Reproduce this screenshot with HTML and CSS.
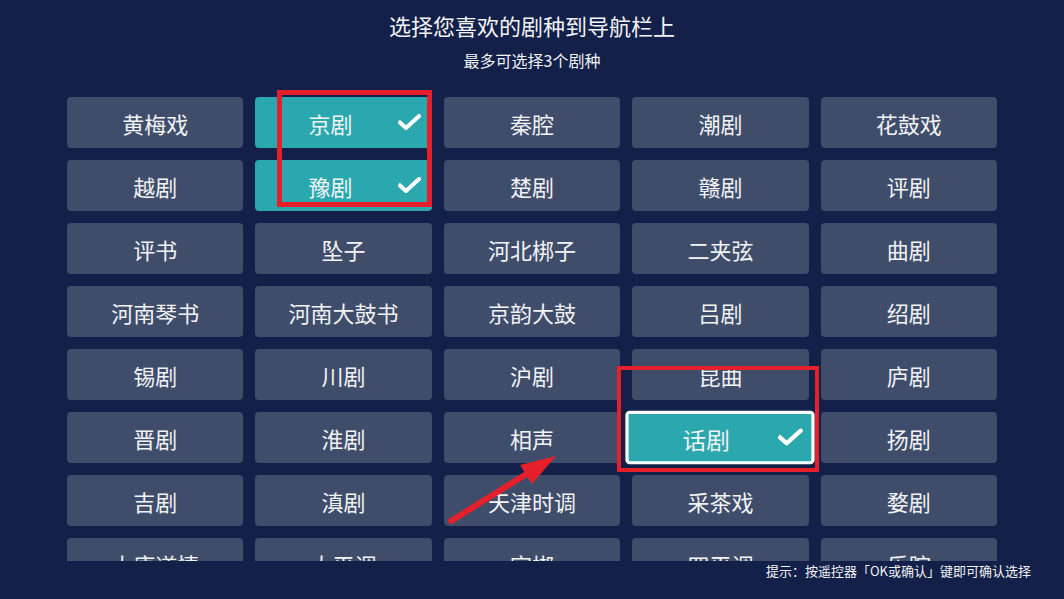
FILE: index.html
```html
<!DOCTYPE html>
<html lang="zh-CN">
<head>
    <meta charset="UTF-8">
    <title>选择剧种</title>
    <link rel="stylesheet" href="styles.css">
</head>
<body>
    <div class="page">
        <div class="header">
            <h1 class="title">选择您喜欢的剧种到导航栏上</h1>
            <p class="subtitle">最多可选择3个剧种</p>
        </div>
        <div class="grid-wrap">
            <div class="grid">
                <div class="tile">黄梅戏</div>
                <div class="tile selected">京剧<svg class="check" viewBox="0 0 23 16"><polyline points="2,8.5 8,14 21,2"/></svg></div>
                <div class="tile">秦腔</div>
                <div class="tile">潮剧</div>
                <div class="tile">花鼓戏</div>

                <div class="tile">越剧</div>
                <div class="tile selected">豫剧<svg class="check" viewBox="0 0 23 16"><polyline points="2,8.5 8,14 21,2"/></svg></div>
                <div class="tile">楚剧</div>
                <div class="tile">赣剧</div>
                <div class="tile">评剧</div>

                <div class="tile">评书</div>
                <div class="tile">坠子</div>
                <div class="tile">河北梆子</div>
                <div class="tile">二夹弦</div>
                <div class="tile">曲剧</div>

                <div class="tile">河南琴书</div>
                <div class="tile">河南大鼓书</div>
                <div class="tile">京韵大鼓</div>
                <div class="tile">吕剧</div>
                <div class="tile">绍剧</div>

                <div class="tile">锡剧</div>
                <div class="tile">川剧</div>
                <div class="tile">沪剧</div>
                <div class="tile">昆曲</div>
                <div class="tile">庐剧</div>

                <div class="tile">晋剧</div>
                <div class="tile">淮剧</div>
                <div class="tile">相声</div>
                <div class="tile selected focused">话剧<svg class="check" viewBox="0 0 23 16"><polyline points="2,8.5 8,14 21,2"/></svg></div>
                <div class="tile">扬剧</div>

                <div class="tile">吉剧</div>
                <div class="tile">滇剧</div>
                <div class="tile">天津时调</div>
                <div class="tile">采茶戏</div>
                <div class="tile">婺剧</div>

                <div class="tile">太康道情</div>
                <div class="tile">大平调</div>
                <div class="tile">宛梆</div>
                <div class="tile">四平调</div>
                <div class="tile">乐腔</div>
            </div>
        </div>
        <div class="hint">提示：按遥控器「OK或确认」键即可确认选择</div>
    </div>

    <!-- annotations drawn over the screenshot -->
    <div class="mark mark-top"></div>
    <div class="mark mark-focus"></div>
    <svg class="arrow" viewBox="0 0 130 90">
        <line x1="11" y1="76" x2="96" y2="23"/>
        <polygon points="116,11 80,20 92,39"/>
    </svg>
</body>
</html>
```

FILE: styles.css
```css
body {
    margin: 0;
    background: #13204a;
    color: #f2f3f5;
    font-family: "Noto Sans CJK SC", "Noto Sans", sans-serif;
    overflow: hidden;
}
.page { width: 1064px; height: 599px; }

.header { padding-top: 9px; text-align: center; }
.title {
    margin: 0;
    font-size: 22px;
    font-weight: 400;
    line-height: 32px;
}
.subtitle {
    margin: 8px 0 0 0;
    font-size: 16px;
    line-height: 22px;
}

.grid-wrap {
    margin-top: 26px;
    height: 464px;
    overflow: hidden;
    padding: 0 67px;
}
.grid {
    display: grid;
    grid-template-columns: repeat(5, 1fr);
    grid-auto-rows: 51px;
    gap: 12px;
}
.tile {
    position: relative;
    display: flex;
    align-items: center;
    justify-content: center;
    background: #3f4d6b;
    border-radius: 4px;
    font-size: 22px;
    line-height: 1;
    box-sizing: border-box;
}
.tile.selected {
    background: #2aa8ae;
    padding-right: 26px;
}
.tile.focused {
    border: 3px solid #fff;
    transform: scale(1.075, 1.05);
}
.check {
    position: absolute;
    right: 11px;
    top: 17px;
    width: 23px;
    height: 16px;
}
.focused .check { right: 8px; top: 14px; }
.check polyline {
    fill: none;
    stroke: #fff;
    stroke-width: 4;
    stroke-linecap: square;
    stroke-linejoin: miter;
}

.hint {
    text-align: right;
    padding-right: 33px;
    font-size: 13px;
    line-height: 20px;
}

.mark {
    position: absolute;
    border: 5px solid #e5202a;
    box-sizing: border-box;
}
.mark-top { left: 277px; top: 90px; width: 155px; height: 117px; }
.mark-focus { left: 617px; top: 366px; width: 202px; height: 106px; border-width: 4.5px; }

.arrow {
    position: absolute;
    left: 440px;
    top: 445px;
    width: 130px;
    height: 90px;
}
.arrow line { stroke: #e5202a; stroke-width: 6; stroke-linecap: round; }
.arrow polygon { fill: #e5202a; }
```
